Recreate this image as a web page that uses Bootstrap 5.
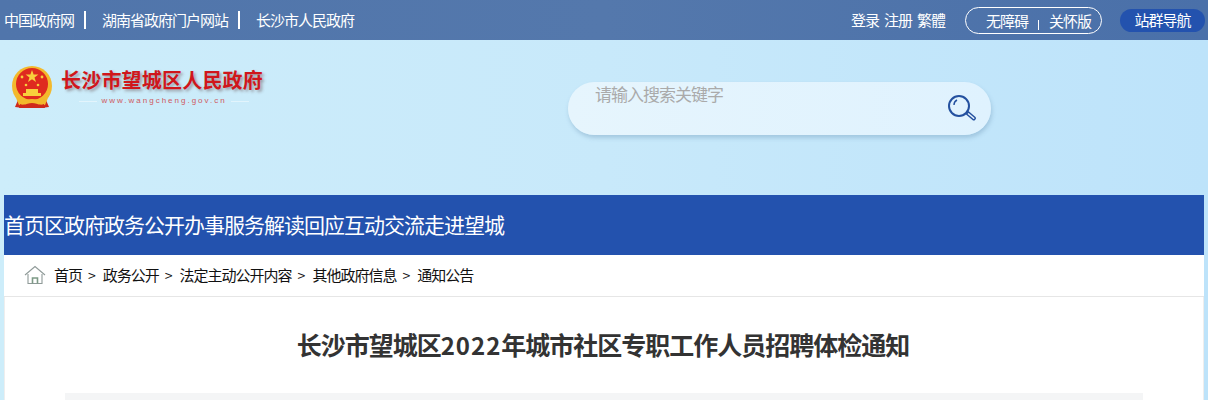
<!DOCTYPE html>
<html lang="zh-CN">
<head>
  <meta charset="UTF-8" />
  <title>长沙市望城区2022年城市社区专职工作人员招聘体检通知</title>
  <link href="https://cdn.jsdelivr.net/npm/bootstrap@5.3.0/dist/css/bootstrap.min.css" rel="stylesheet" />
  <style>
    body {
      font-family: "Noto Sans CJK SC", "Liberation Sans", sans-serif;
      background: linear-gradient(90deg, #cdedfa 0%, #c8e9fa 50%, #bde3fa 100%);
      color: #222;
      min-height: 100vh;
    }
    a { color: inherit; text-decoration: none; }
    .top-strip {
      height: 40px;
      background: linear-gradient(90deg, #5075ab 0%, #5478ac 50%, #4a70a9 100%);
      color: #fff;
      font-size: 15px;
      letter-spacing: -1px;
      line-height: 42px;
    }
    .top-left { padding-left: 4px; }
    .top-sep { width: 2px; height: 18px; background: #fff; margin: 0 16px 0 10px; }
    .top-right { padding-right: 3px; gap: 5px; }
    .care-pill {
      width: 137px;
      height: 27px;
      margin-left: 15px;
      margin-right: 13px;
      border: 1px solid #fff;
      border-radius: 14px;
      line-height: 25px;
      padding-left: 20px;
    }
    .care-sep { width: 1px; height: 10px; background: #fff; margin: 12px 10px 0 10px; }
    .site-pill {
      width: 85px;
      height: 23px;
      background: #2352ae;
      border-radius: 12px;
      line-height: 21px;
      text-align: center;
    }
    .head-area { height: 155px; }
    .logo-box { padding: 25px 0 0 11px; width: 568px; }
    .logo-name {
      font-size: 20px;
      font-weight: 700;
      letter-spacing: .2px;
      line-height: 24px;
      color: #d0161b;
      text-shadow: 2px 2px 3px rgba(90, 60, 60, .45);
      white-space: nowrap;
      margin-top: 3px;
    }
    .logo-url {
      font-family: "Liberation Sans", sans-serif;
      font-size: 8px;
      line-height: 10px;
      letter-spacing: 2px;
      color: #cf5a5f;
      margin-top: 4px;
      width: 201px;
      padding: 0 13px 0 18px;
      gap: 4px;
    }
    .logo-url::before, .logo-url::after {
      content: "";
      flex: 1;
      height: 1px;
      background: rgba(255, 255, 255, .45);
    }
    .search-box {
      width: 423px;
      height: 53px;
      margin-top: 42px;
      border-radius: 27px;
      background: linear-gradient(90deg, #e6f5fd 0%, #dff2fe 100%);
      box-shadow: 1px 3px 4px rgba(120, 160, 190, .45);
      padding: 0 14px 0 27px;
    }
    .search-hint { font-size: 17px; letter-spacing: -1px; line-height: 24px; color: #aaa; }
    .search-icon { margin-top: 10px; }
    .main-wrap { margin: 0 4px; }
    .nav-strip {
      height: 60px;
      background: #2352ae;
      color: #fff;
      font-size: 21px;
      letter-spacing: -1px;
      line-height: 58px;
    }
    .crumb-row {
      height: 42px;
      background: #fff;
      border-bottom: 1px solid #e6e6e6;
      padding: 0 0 2px 20px;
      font-size: 15px;
      letter-spacing: -1px;
      line-height: 38px;
      color: #111;
    }
    .crumb-gt { margin: 0 7px 0 6px; letter-spacing: 0; font-size: 14px; }
    .content-area {
      background: #fff;
      border-left: 1px solid #eee;
      border-right: 1px solid #eee;
      padding: 29px 60px 0;
    }
    .doc-title {
      font-size: 25px;
      letter-spacing: -1px;
      font-weight: 700;
      line-height: 36px;
      color: #333;
      text-align: center;
      margin: 0 0 30px;
      padding-right: 2px;
    }
    .doc-year { font-size: 24px; letter-spacing: 1px; }
    .doc-meta { height: 60px; background: #f4f5f6; }
  </style>
</head>
<body>
  <div class="top-strip d-flex justify-content-between">
    <div class="top-left d-flex align-items-center">
      <a href="#">中国政府网</a><span class="top-sep"></span>
      <a href="#">湖南省政府门户网站</a><span class="top-sep"></span>
      <a href="#">长沙市人民政府</a>
    </div>
    <div class="top-right d-flex align-items-center">
      <a href="#">登录</a><a href="#">注册</a><a href="#">繁體</a>
      <div class="care-pill d-flex">
        <a href="#">无障碍</a><span class="care-sep"></span><a href="#">关怀版</a>
      </div>
      <a href="#" class="site-pill">站群导航</a>
    </div>
  </div>

  <div class="head-area d-flex">
    <div class="logo-box d-flex gap-2 align-items-start">
      <svg width="42" height="44" viewBox="0 0 42 44">
        <path d="M7 35l-3 7 8 1 9-2 9 2 8-1-3-7z" fill="#cf2a1c"/>
        <circle cx="21" cy="21" r="20" fill="#f3b92c"/>
        <circle cx="21" cy="19" r="16" fill="#df2a1f"/>
        <path d="M21 5l1.6 4.6h4.8l-3.9 2.9 1.5 4.6-4-2.9-4 2.9 1.5-4.6-3.9-2.9h4.8z" fill="#f8cf3c"/>
        <circle cx="11" cy="12" r="1.4" fill="#f8cf3c"/>
        <circle cx="31" cy="12" r="1.4" fill="#f8cf3c"/>
        <circle cx="15" cy="20" r="1.3" fill="#f8cf3c"/>
        <circle cx="27" cy="20" r="1.3" fill="#f8cf3c"/>
        <path d="M12 28h18v3H12zM15 24h12v4H15z" fill="#f8cf3c"/>
        <path d="M5 33c5 4 9 1 16 1s11 3 16-1l-3 7c-5 1-8-2-13-2s-8 3-13 2z" fill="#f3b92c"/>
        <path d="M9 39c4 2 8-1 12-1s8 3 12 1l1 4H8z" fill="#cf2a1c"/>
      </svg>
      <div>
        <div class="logo-name">长沙市望城区人民政府</div>
        <div class="logo-url d-flex align-items-center">www.wangcheng.gov.cn</div>
      </div>
    </div>
    <div class="search-box d-flex justify-content-between">
      <span class="search-hint">请输入搜索关键字</span>
      <svg class="search-icon align-self-start" width="30" height="30" viewBox="0 0 30 30" fill="none" stroke="#23509f">
        <circle cx="12" cy="14" r="10" stroke-width="2"/>
        <path d="M7 13c0-2 1-4 3-5" stroke-width="1.4"/>
        <path d="M19.5 22l2-2 6.500 5.500c1 1-1 3-2 2z" stroke-width="1.500" fill="#e6f3fd"/>
      </svg>
    </div>
  </div>

  <div class="main-wrap">
    <nav class="nav-strip d-flex">
      <a href="#">首页</a><a href="#">区政府</a><a href="#">政务公开</a><a href="#">办事服务</a><a href="#">解读回应</a><a href="#">互动交流</a><a href="#">走进望城</a>
    </nav>
    <div class="crumb-row d-flex align-items-center">
      <svg class="me-2" width="22" height="20" viewBox="0 0 22 20" fill="none" stroke="#8f9a98" stroke-width="1.100">
        <path d="M1 10L11 1.500 21 10"/>
        <path d="M4 9v9.500h14V9"/>
        <path d="M8.500 18.500V13h5v5.500" stroke="#7d9a86" stroke-width="1.600"/>
      </svg>
      <a href="#">首页</a><span class="crumb-gt">&gt;</span>
      <a href="#">政务公开</a><span class="crumb-gt">&gt;</span>
      <a href="#">法定主动公开内容</a><span class="crumb-gt">&gt;</span>
      <a href="#">其他政府信息</a><span class="crumb-gt">&gt;</span>
      <a href="#">通知公告</a>
    </div>
    <div class="content-area">
      <h1 class="doc-title">长沙市望城区<span class="doc-year">2022</span>年城市社区专职工作人员招聘体检通知</h1>
      <div class="doc-meta"></div>
    </div>
  </div>
  <script src="https://cdn.jsdelivr.net/npm/bootstrap@5.3.0/dist/js/bootstrap.bundle.min.js"></script>
</body>
</html>
